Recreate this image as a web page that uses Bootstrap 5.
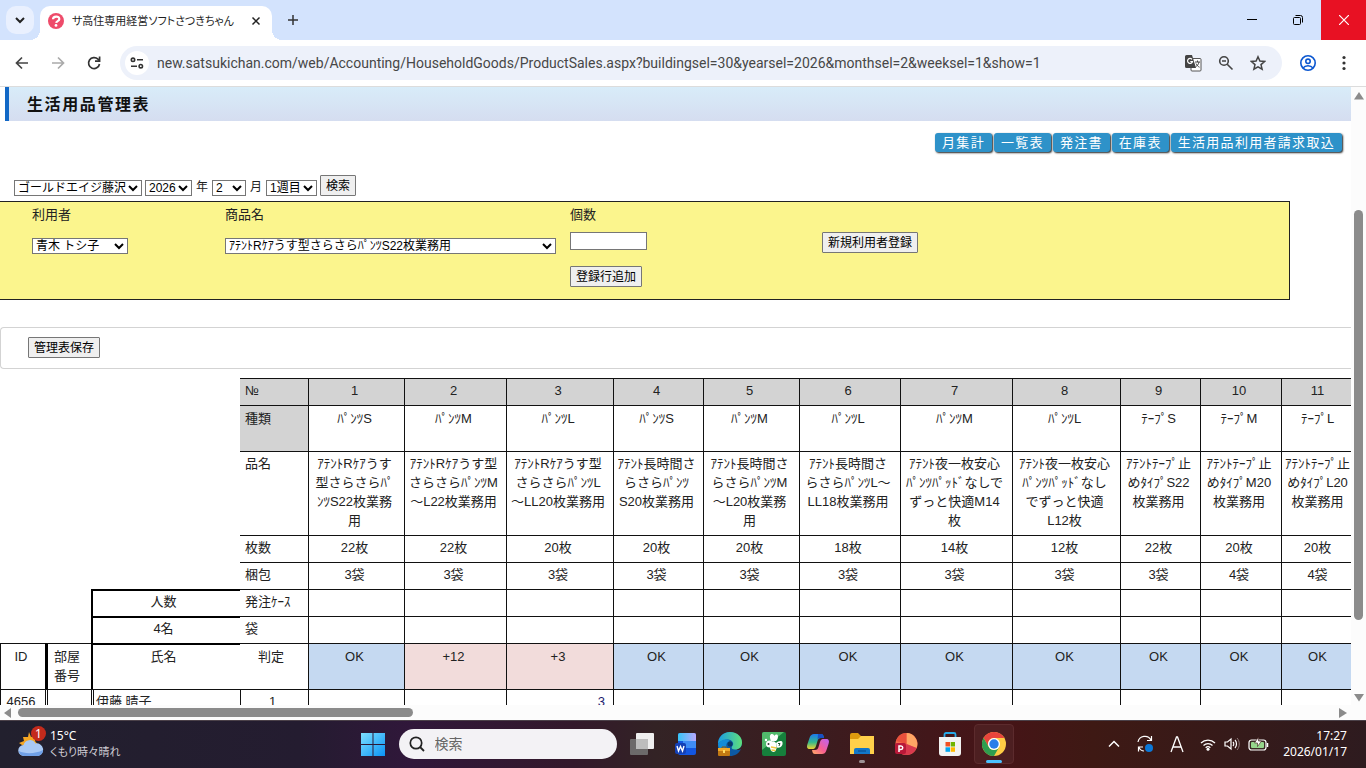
<!DOCTYPE html>
<html lang="ja">
<head>
<meta charset="utf-8">
<meta name="viewport" content="width=device-width, initial-scale=1">
<title>サ高住専用経営ソフトさつきちゃん</title>
<link href="https://cdn.jsdelivr.net/npm/bootstrap@5.3.0/dist/css/bootstrap.min.css" rel="stylesheet">
<style>
  body { font-family: "Liberation Sans", "Noto Sans CJK JP", sans-serif; font-size: 13px; line-height: 19px; color: #222; background: #fff; }
  button { padding: 0; border: 0; background: none; color: inherit; }
  svg { display: block; flex: none; }
  .ui-font { font-family: "Noto Sans", "Noto Sans CJK JP", sans-serif; font-size: 12px; line-height: 16px; font-feature-settings: "palt"; }
  .ui-small { font-size: 11px; }

  /* browser frame */
  .tabstrip { height: 40px; background: #d3e3fd; padding-left: 6px; }
  .tab-menu { width: 28px; height: 28px; border-radius: 10px; background: #e9f0fe; margin-right: 6px; }
  .tab-active { position: relative; width: 232px; height: 34px; background: #fff; border-radius: 10px 10px 0 0; padding: 0 10px 4px 8px; color: #1f1f1f; }
  .tab-active::before, .tab-active::after { content: ""; position: absolute; bottom: 0; width: 10px; height: 10px; }
  .tab-active::before { left: -10px; background: radial-gradient(circle at 0 0, transparent 10px, #fff 10px); }
  .tab-active::after { right: -10px; background: radial-gradient(circle at 100% 0, transparent 10px, #fff 10px); }
  .win-btn { width: 46px; height: 40px; }
  .win-close { background: #e81123; width: 45px; }
  .toolbar { height: 47px; border-bottom: 1px solid #dcdcdc; padding: 0 14px; }
  .nav-ico { width: 16px; margin-right: 20px; }
  .omnibox { height: 34px; border-radius: 17px; background: #edf1fa; padding: 0 16px 0 5px; margin: 0 18px 0 -2px; }
  .site-info { width: 24px; height: 24px; border-radius: 50%; background: #fff; margin-right: 8px; }
  .url-box { border: 0; background: none; padding: 0; outline: 0; color: #474747; font-family: Roboto, sans-serif; font-size: 14px; }
  .more-btn { margin-left: 20px; }

  /* page */
  .page-head { height: 34px; margin-left: 5px; border-left: 4px solid #1268c6; background: linear-gradient(#d8ecf9, #d5ddf0); padding: 2px 0 0 18px; }
  .page-title { font-size: 16px; line-height: 20px; letter-spacing: .1em; font-weight: 700; color: #111; }
  .link-row { padding: 12px 9px 0 0; gap: 2px; }
  .link-btn { background: #2e92c9; color: #fff; text-decoration: none; letter-spacing: .1em; height: 19px; line-height: 19px; padding: 0 7px; border-radius: 3px; box-shadow: 1px 1px 2px #222; white-space: nowrap; }
  .plain-btn { font-size: 12px; line-height: 18px; height: 21px; padding: 1px 5px 0; border: 1px solid #767676; background: #efefef; color: #000; border-radius: 1px; white-space: nowrap; }
  .plain-select { appearance: none; font-size: 12px; line-height: 14px; height: 16px; padding: 0 0 0 3px; border: 1px solid #767676; border-radius: 0; background: #fff url("data:image/svg+xml,%3Csvg xmlns='http://www.w3.org/2000/svg' width='10' height='8' viewBox='0 0 10 8'%3E%3Cpath d='M1 2l4 4 4-4' fill='none' stroke='%23000' stroke-width='2'/%3E%3C/svg%3E") no-repeat right 3px center; color: #000; }
  .filters { padding: 0 0 5px 14px; height: 48px; gap: 3px; margin-top: 1px; }
  .filters label { font-size: 12px; line-height: 18px; margin: 0 1px; }
  .w-home { width: 128px; } .w-year { width: 47px; } .w-month { width: 34px; } .w-week { width: 51px; } .w-user { width: 96px; } .w-item { width: 331px; }
  .entry { display: grid; grid-template-columns: 193px 345px 252px 1fr; height: 99px; margin-right: 61px; padding: 3px 0 0 32px; background: #fbf58d; border: 1px solid #222; border-left: 0; }
  .entry .plain-select { margin-top: 14px; }
  .qty-input { width: 77px; height: 18px; border: 1px solid #767676; border-radius: 0; padding: 0 2px; background: #fff; }
  .new-user { padding-top: 27px; }
  .save-bar { height: 42px; margin-top: 27px; border: 1px solid #d3d3d3; border-right: 0; border-radius: 4px 0 0 4px; padding: 9px 0 0 27px; }

  /* management sheet */
  .sheet { table-layout: fixed; width: 1357px; border-collapse: separate; border-spacing: 0; margin-top: 9px; color: #222; }
  .sheet th, .sheet td { border: 0 solid #111; border-width: 1px 0 0 1px; padding: 2px 4px 5px 0; text-align: center; vertical-align: top; font-weight: 400; white-space: nowrap; height: 27px; }
  .sheet .tall > * { height: 46px; padding-top: 3px; padding-bottom: 4px; }
  .sheet .blank { border: 0; }
  .sheet .lbl { border-left: 0; text-align: left; padding-left: 5px; padding-right: 0; }
  .sheet .mid { text-align: center; padding-left: 0; padding-right: 6px; }
  .sheet .grey, .sheet .numbers td { background: #d3d3d3; }
  .sheet .bold-box { border-width: 2px 0 0 2px; border-color: #000; padding: 1px 6px 5px 0; }
  .sheet .tall .bold-box { padding-top: 2px; }
  .sheet .bold-left { border-left: 3px solid #000; padding-right: 5px; }
  .sheet .ok { background: #c5d9f1; }
  .sheet .over { background: #f2dcdb; }
  .sheet .dbl { border-left: 3px double #111; }
  .sheet .namec { text-align: left; padding-left: 2px; }
  .sheet .qty { text-align: right; padding-right: 8px; color: #1b1b6e; }

  /* scroll bars */
  .vbar { width: 15px; background: #fcfcfc; padding: 5px 0 3px; }
  .vthumb { width: 9px; height: 410px; border-radius: 5px; background: #8b8b8b; margin-top: 110px; }
  .hbar { height: 15px; background: #fcfcfc; padding: 0 19px 0 4px; }
  .hthumb { width: 395px; height: 9px; border-radius: 5px; background: #8b8b8b; margin-left: 6px; }

  /* task bar */
  .taskbar { display: grid; grid-template-columns: 1fr auto 1fr; height: 48px; padding-bottom: 1px; background: linear-gradient(90deg, #22202e 0, #241c30 22%, #30173a 30%, #33192b 42%, #332325 48%, #3a1d20 58%, #461417 73%, #3e1914 80%, #2e1b1f 100%); border-top: 1px solid #4b4149; color: #fff; }
  .weather { position: relative; padding-left: 18px; gap: 6px; }
  .alert-dot { position: absolute; left: 31px; top: 5px; width: 15px; height: 15px; border-radius: 50%; background: #c42b1c; line-height: 15px; text-align: center; }
  .dim { color: #cfccd3; }
  .start { width: 44px; height: 46px; }
  .task-search { width: 218px; height: 30px; border-radius: 15px; background: #f3f2f5; margin: 0 3px 0 4px; padding: 0 10px; gap: 10px; }
  .task-search input { width: 150px; border: 0; padding: 0; background: none; outline: 0; font-size: 14px; line-height: 20px; }
  .task-search input::placeholder { color: #666; opacity: 1; }
  .app { position: relative; width: 44px; height: 46px; }
  .app-on { background: #4d1f21; border: 1px solid #5c2b2d; border-radius: 4px; width: 40px; height: 40px; margin: 0 2px; }
  .run-mark { position: absolute; bottom: 4px; width: 6px; height: 3px; border-radius: 2px; background: #9d9295; }
  .app-on .run-mark { width: 16px; background: #4cc2ff; bottom: 0; }
  .tray { padding-right: 19px; }
  .battery { margin-right: 14px; }
</style>
</head>
<body class="vh-100 overflow-hidden d-flex flex-column">

<header class="flex-shrink-0">
  <div class="tabstrip d-flex align-items-end">
    <button class="tab-menu d-flex align-items-center justify-content-center align-self-center" aria-label="タブを検索"><svg width="10" height="7" viewBox="0 0 10 7"><path d="M1 1l4 4 4-4" fill="none" stroke="#222" stroke-width="2"/></svg></button>
    <div class="tab-active ui-font ui-small d-flex align-items-center">
      <svg width="16" height="16" viewBox="0 0 16 16"><circle cx="8" cy="8" r="8" fill="#ee4b6a"/><path d="M5 6.300C5 2.700 11.500 2.600 11.300 6.100 11.200 8.200 8.400 8 8.200 9.800" fill="none" stroke="#fff" stroke-width="2.200"/><circle cx="8" cy="12.400" r="1.400" fill="#fff"/></svg>
      <span class="ms-2 me-auto text-nowrap">サ高住専用経営ソフトさつきちゃん</span>
      <button aria-label="閉じる"><svg width="12" height="12" viewBox="0 0 12 12"><path d="M2.500 2.500l7 7m0-7l-7 7" stroke="#222" stroke-width="1.500"/></svg></button>
    </div>
    <button class="ms-3 mb-auto mt-auto" aria-label="新しいタブ"><svg width="10" height="10" viewBox="0 0 10 10"><path d="M5 0v10M0 5h10" stroke="#333" stroke-width="1.500"/></svg></button>
    <div class="ms-auto d-flex">
      <button class="win-btn d-flex align-items-center justify-content-center" aria-label="最小化"><svg width="10" height="10" viewBox="0 0 10 10"><path d="M0 4.500h10" stroke="#000"/></svg></button>
      <button class="win-btn d-flex align-items-center justify-content-center" aria-label="元に戻す"><svg width="10" height="10" viewBox="0 0 10 10"><rect x=".5" y="2.500" width="7" height="7" rx="1" fill="none" stroke="#000"/><path d="M2.500 .5h5a2 2 0 0 1 2 2v5" fill="none" stroke="#000"/></svg></button>
      <button class="win-btn win-close d-flex align-items-center justify-content-center" aria-label="ウィンドウを閉じる"><svg width="10" height="10" viewBox="0 0 10 10"><path d="M0 0l10 10M10 0L0 10" stroke="#fff" stroke-width="1.200"/></svg></button>
    </div>
  </div>
  <div class="toolbar d-flex align-items-center">
    <button class="nav-ico" aria-label="戻る"><svg width="16" height="16" viewBox="0 0 16 16"><path d="M14 8H3m5-5.500L2.500 8 8 13.500" fill="none" stroke="#444" stroke-width="1.700"/></svg></button>
    <button class="nav-ico" aria-label="進む"><svg width="16" height="16" viewBox="0 0 16 16"><path d="M2 8h11M8 2.500L13.500 8 8 13.500" fill="none" stroke="#aaa" stroke-width="1.700"/></svg></button>
    <button class="nav-ico" aria-label="再読み込み"><svg width="16" height="16" viewBox="0 0 16 16"><path d="M13.500 9A5.500 5.500 0 1 1 12 4.200L13.300 5.500" fill="none" stroke="#333" stroke-width="1.700"/><path d="M13.600 1.500v4.700H9" fill="none" stroke="#333" stroke-width="1.700"/></svg></button>
    <div class="omnibox flex-grow-1 d-flex align-items-center">
      <button class="site-info d-flex align-items-center justify-content-center" aria-label="サイト情報"><svg width="14" height="12" viewBox="0 0 14 12"><g fill="none" stroke="#333" stroke-width="1.600"><circle cx="3" cy="2.800" r="1.700"/><path d="M7 2.800h6M1 9.200h6"/><circle cx="10.800" cy="9.200" r="1.700"/></g></svg></button>
      <input class="url-box flex-grow-1" aria-label="アドレス" value="new.satsukichan.com/web/Accounting/HouseholdGoods/ProductSales.aspx?buildingsel=30&amp;yearsel=2026&amp;monthsel=2&amp;weeksel=1&amp;show=1">
      <div class="d-flex gap-3">
        <svg width="17" height="17" viewBox="0 0 17 17"><rect x="6" y="3.500" width="10" height="12.500" rx="1" fill="#fff" stroke="#555"/><path d="M1.500 0H7l4 13H1.500A1.500 1.500 0 0 1 0 11.500v-10A1.500 1.500 0 0 1 1.500 0z" fill="#444"/><path d="M7 4.300a2.500 2.500 0 1 0 .5 2.200H5.300" fill="none" stroke="#fff" stroke-width="1.200"/><path d="M10 7h5M12.500 5.500V7M14 7c-.5 2.500-2 4-3.500 5M11 8.500c.8 1.800 2 3 3.500 3.700" fill="none" stroke="#444"/></svg>
        <svg width="16" height="16" viewBox="0 0 16 16"><circle cx="6" cy="6" r="4.300" fill="none" stroke="#444" stroke-width="1.600"/><path d="M4 6h4M9.200 9.200l5.300 5.300" stroke="#444" stroke-width="1.600"/></svg>
        <svg width="16" height="16" viewBox="0 0 16 16"><path d="M8 1.800l1.900 4.300 4.700.4-3.600 3.100 1.100 4.600L8 11.800l-4.100 2.400L5 9.600 1.400 6.500l4.700-.4z" fill="none" stroke="#444" stroke-width="1.500"/></svg>
      </div>
    </div>
    <button aria-label="プロフィール"><svg width="16" height="16" viewBox="0 0 16 16"><g fill="none" stroke="#0b57d0" stroke-width="1.600"><circle cx="8" cy="8" r="7.200"/><circle cx="8" cy="6.300" r="2.200"/><path d="M3.200 12.900c2-2.900 7.600-2.900 9.600 0"/></g></svg></button>
    <button class="more-btn" aria-label="メニュー"><svg width="16" height="16" viewBox="0 0 16 16" fill="#333"><circle cx="8" cy="2.500" r="1.600"/><circle cx="8" cy="8" r="1.600"/><circle cx="8" cy="13.500" r="1.600"/></svg></button>
  </div>
</header>

<div class="d-flex flex-grow-1 overflow-hidden">
  <main class="flex-grow-1 overflow-hidden">
    <div class="page-head d-flex align-items-center"><h1 class="page-title mb-0">生活用品管理表</h1></div>
    <nav class="link-row d-flex justify-content-end">
      <a class="link-btn" href="#">月集計</a><a class="link-btn" href="#">一覧表</a><a class="link-btn" href="#">発注書</a><a class="link-btn" href="#">在庫表</a><a class="link-btn" href="#">生活用品利用者請求取込</a>
    </nav>
    <form class="filters d-flex align-items-end">
      <select class="plain-select w-home" aria-label="施設"><option>ゴールドエイジ藤沢</option></select>
      <select class="plain-select w-year" id="year"><option>2026</option></select>
      <label for="year">年</label>
      <select class="plain-select w-month" id="month"><option>2</option></select>
      <label for="month">月</label>
      <select class="plain-select w-week" aria-label="週"><option>1週目</option></select>
      <button type="button" class="plain-btn">検索</button>
    </form>
    <form class="entry">
      <div><label class="d-block" for="user">利用者</label><select id="user" class="plain-select w-user d-block"><option>青木 トシ子</option></select></div>
      <div><label class="d-block" for="item">商品名</label><select id="item" class="plain-select w-item d-block"><option>ｱﾃﾝﾄRｹｱうす型さらさらﾊﾟﾝﾂS22枚業務用</option></select></div>
      <div><label class="d-block mb-2" for="qty">個数</label><input id="qty" class="qty-input d-block mb-3" type="text"><button type="button" class="plain-btn d-block">登録行追加</button></div>
      <div class="new-user"><button type="button" class="plain-btn d-block">新規利用者登録</button></div>
    </form>
    <div class="save-bar"><button type="button" class="plain-btn d-block">管理表保存</button></div>

    <table class="sheet">
      <colgroup><col style="width:45px"><col style="width:46px"><col style="width:149px"><col style="width:68px"><col style="width:96px"><col style="width:102px"><col style="width:107px"><col style="width:90px"><col style="width:96px"><col style="width:101px"><col style="width:112px"><col style="width:108px"><col style="width:80px"><col style="width:81px"><col style="width:76px"></colgroup>
      <tbody>
      <tr class="numbers"><th class="blank" colspan="3" rowspan="5"></th><th class="lbl grey">№</th><td>1</td><td>2</td><td>3</td><td>4</td><td>5</td><td>6</td><td>7</td><td>8</td><td>9</td><td>10</td><td>11</td></tr>
      <tr class="tall"><th class="lbl grey">種類</th><td>ﾊﾟﾝﾂS</td><td>ﾊﾟﾝﾂM</td><td>ﾊﾟﾝﾂL</td><td>ﾊﾟﾝﾂS</td><td>ﾊﾟﾝﾂM</td><td>ﾊﾟﾝﾂL</td><td>ﾊﾟﾝﾂM</td><td>ﾊﾟﾝﾂL</td><td>ﾃｰﾌﾟS</td><td>ﾃｰﾌﾟM</td><td>ﾃｰﾌﾟL</td></tr>
      <tr><th class="lbl">品名</th>
        <td>ｱﾃﾝﾄRｹｱうす<br>型さらさらﾊﾟ<br>ﾝﾂS22枚業務<br>用</td>
        <td>ｱﾃﾝﾄRｹｱうす型<br>さらさらﾊﾟﾝﾂM<br>～L22枚業務用</td>
        <td>ｱﾃﾝﾄRｹｱうす型<br>さらさらﾊﾟﾝﾂL<br>～LL20枚業務用</td>
        <td>ｱﾃﾝﾄ長時間さ<br>らさらﾊﾟﾝﾂ<br>S20枚業務用</td>
        <td>ｱﾃﾝﾄ長時間さ<br>らさらﾊﾟﾝﾂM<br>～L20枚業務<br>用</td>
        <td>ｱﾃﾝﾄ長時間さ<br>らさらﾊﾟﾝﾂL～<br>LL18枚業務用</td>
        <td>ｱﾃﾝﾄ夜一枚安心<br>ﾊﾟﾝﾂﾊﾟｯﾄﾞなしで<br>ずっと快適M14<br>枚</td>
        <td>ｱﾃﾝﾄ夜一枚安心<br>ﾊﾟﾝﾂﾊﾟｯﾄﾞなし<br>でずっと快適<br>L12枚</td>
        <td>ｱﾃﾝﾄﾃｰﾌﾟ止<br>めﾀｲﾌﾟS22<br>枚業務用</td>
        <td>ｱﾃﾝﾄﾃｰﾌﾟ止<br>めﾀｲﾌﾟM20<br>枚業務用</td>
        <td>ｱﾃﾝﾄﾃｰﾌﾟ止<br>めﾀｲﾌﾟL20<br>枚業務用</td></tr>
      <tr><th class="lbl">枚数</th><td>22枚</td><td>22枚</td><td>20枚</td><td>20枚</td><td>20枚</td><td>18枚</td><td>14枚</td><td>12枚</td><td>22枚</td><td>20枚</td><td>20枚</td></tr>
      <tr><th class="lbl">梱包</th><td>3袋</td><td>3袋</td><td>3袋</td><td>3袋</td><td>3袋</td><td>3袋</td><td>3袋</td><td>3袋</td><td>3袋</td><td>4袋</td><td>4袋</td></tr>
      <tr><th class="blank" colspan="2"></th><th class="bold-box">人数</th><th class="lbl">発注ｹｰｽ</th><td></td><td></td><td></td><td></td><td></td><td></td><td></td><td></td><td></td><td></td><td></td></tr>
      <tr><th class="blank" colspan="2"></th><td class="bold-box">4名</td><th class="lbl">袋</th><td></td><td></td><td></td><td></td><td></td><td></td><td></td><td></td><td></td><td></td><td></td></tr>
      <tr class="tall"><th>ID</th><th class="bold-left">部屋<br>番号</th><th class="bold-box">氏名</th><th class="lbl mid">判定</th><td class="ok">OK</td><td class="over">+12</td><td class="over">+3</td><td class="ok">OK</td><td class="ok">OK</td><td class="ok">OK</td><td class="ok">OK</td><td class="ok">OK</td><td class="ok">OK</td><td class="ok">OK</td><td class="ok">OK</td></tr>
      <tr><td>4656</td><td class="dbl"></td><td class="dbl namec">伊藤 晴子</td><td>1</td><td></td><td></td><td class="qty">3</td><td></td><td></td><td></td><td></td><td></td><td></td><td></td><td></td></tr>
      </tbody>
    </table>
  </main>
  <div class="vbar flex-shrink-0 d-flex flex-column align-items-center">
    <svg width="10" height="8" viewBox="0 0 10 8"><path d="M5 0l5 7.500H0z" fill="#8b8b8b"/></svg>
    <div class="vthumb"></div>
    <svg class="mt-auto" width="10" height="8" viewBox="0 0 10 8"><path d="M5 7.500L10 0H0z" fill="#8b8b8b"/></svg>
  </div>
</div>
<div class="hbar flex-shrink-0 d-flex align-items-center">
  <svg width="8" height="10" viewBox="0 0 8 10"><path d="M0 5l7-5v10z" fill="#8b8b8b"/></svg>
  <div class="hthumb"></div>
  <svg class="ms-auto" width="8" height="10" viewBox="0 0 8 10"><path d="M8 5L0 0v10z" fill="#8b8b8b"/></svg>
</div>

<footer class="taskbar ui-font flex-shrink-0">
  <div class="weather d-flex align-items-center">
    <svg width="26" height="26" viewBox="0 0 26 26"><path d="M11 1l2 5 5-2-1 6 4 5-8 4-6-3-6-4 5-2-1-4 5 0z" fill="#f5a623"/><path d="M6 25a5.500 5.500 0 0 1-.5-11 6.500 6.500 0 0 1 12-1.500A6 6 0 0 1 20 25z" fill="#a9c9f5"/><path d="M1 20c5 3 17 3 24-1a5.500 5.500 0 0 1-5 6H6a5.500 5.500 0 0 1-5-5z" fill="#6f9fe6"/></svg>
    <span class="alert-dot">1</span>
    <div><div>15°C</div><div class="dim ui-small">くもり時々晴れ</div></div>
  </div>
  <div class="d-flex align-items-center">
    <button class="start d-flex align-items-center justify-content-center" aria-label="スタート"><svg width="24" height="24" viewBox="0 0 24 24"><defs><linearGradient id="wn" x1="0" y1="0" x2="1" y2="1"><stop stop-color="#7ee0ff"/><stop offset="1" stop-color="#0a93f5"/></linearGradient></defs><path d="M0 1h11.500v11H0zM12.500 1H24v11H12.500zM0 13h11.500v11H0zM12.500 13H24v11H12.500z" fill="url(#wn)"/></svg></button>
    <div class="task-search d-flex align-items-center"><svg width="16" height="16" viewBox="0 0 16 16"><circle cx="7" cy="7" r="5.700" fill="none" stroke="#222" stroke-width="1.700"/><path d="M11 11l4 4" stroke="#222" stroke-width="1.800"/></svg><input type="text" placeholder="検索" aria-label="検索"></div>
    <button class="app d-flex align-items-center justify-content-center" aria-label="タスク ビュー"><svg width="24" height="24" viewBox="0 0 24 24"><rect x="6" y="1" width="18" height="16" rx="1" fill="#efefef"/><rect y="7" width="18" height="16" rx="1" fill="#777" fill-opacity=".85"/><path d="M6 7h12v10H6z" fill="#bdbdbd"/></svg></button>
    <button class="app d-flex align-items-center justify-content-center" aria-label="Word"><svg width="24" height="24" viewBox="0 0 24 24"><defs><linearGradient id="wd" x1="0" x2="1"><stop stop-color="#36c5f7"/><stop offset="1" stop-color="#b9a9ff"/></linearGradient></defs><rect x="4" y="1" width="18" height="22" rx="2" fill="#1356e0"/><path d="M4 9V3a2 2 0 0 1 2-2h14a2 2 0 0 1 2 2v6z" fill="url(#wd)"/><path d="M9 9h13v7H9z" fill="#3f8df5"/><rect x="1" y="11" width="11" height="11" rx="2" fill="#1440b5"/><path d="M3 14l1.500 5L6.500 14.500 8.500 19 10 14" fill="none" stroke="#fff" stroke-width="1.400"/></svg></button>
    <button class="app d-flex align-items-center justify-content-center" aria-label="Edge"><svg width="24" height="24" viewBox="0 0 24 24"><defs><linearGradient id="eg" x1="0" x2="1"><stop stop-color="#1b9de2"/><stop offset="1" stop-color="#5fe07a"/></linearGradient></defs><path d="M0 12C0 5 5 0 12 0s12 5 12 11c0 4-3 6.500-6 6.500 2 1 3.500.5 5-.5-2 4.500-6 7-11 7C5 24 0 19 0 12z" fill="#0c59a4"/><path d="M0 12C0 5 5 0 12 0c8 0 12 5.500 12 10.500 0 4.500-3 7-7 7-3 0-4-1-3-3 3-3 0-7-4-7-4 0-8 1.500-10 4.500z" fill="url(#eg)"/><path d="M0 12c2-4 8-6 12-3-4 1-5 5-2 9v5C3 22 0 17 0 12z" fill="#128bd9"/><circle cx="12" cy="12" r="2.500" fill="#0a3a66"/><rect y="16" width="12" height="8" rx="1" fill="#c27912"/><path d="M0 16h12v3H0z" fill="#f0a92c"/><path d="M4 16v-1h4v1" fill="none" stroke="#8b5208"/><path d="M5 18h2v3H5z" fill="#ffdc63"/></svg></button>
    <button class="app d-flex align-items-center justify-content-center" aria-label="メモアプリ"><svg width="24" height="24" viewBox="0 0 24 24"><rect width="24" height="24" rx="2" fill="#16803c"/><path d="M0 2a2 2 0 0 1 2-2h20L0 18z" fill="#51b96c"/><path d="M9 9C7 4 8 2 10 2c1.500 0 2 1 2.500 2C13.500 2 16 2 16 4.500 16 7 15 8 14 9z" fill="#fff"/><path d="M14 11c2-2 6-3 6.500-.5.500 3-2 6-5.500 5z" fill="#fff"/><circle cx="7.500" cy="12" r="3.500" fill="#fff"/><path d="M9 10c3-2 5 0 5.500 3 .5 4-1 7-3 7s-4-3-3.500-6z" fill="#fff"/><path d="M9 15l5.500 1M9.500 18l4 .5" stroke="#f2c63c" stroke-width="1.400"/><circle cx="6.500" cy="12" r="1" fill="#333"/><path d="M16 11.500h2l-1 2.500" stroke="#245b37" fill="none"/><circle cx="4" cy="8" r="1.200" fill="#fff"/></svg></button>
    <button class="app d-flex align-items-center justify-content-center" aria-label="Copilot"><svg width="24" height="24" viewBox="0 0 24 24"><defs><linearGradient id="ca" x1="0" y1="0" x2="0" y2="1"><stop stop-color="#1b79ee"/><stop offset=".55" stop-color="#35b98c"/><stop offset="1" stop-color="#f0d331"/></linearGradient><linearGradient id="cb" x1="1" y1="0" x2="0" y2="1"><stop stop-color="#bd62f5"/><stop offset=".55" stop-color="#f75e92"/><stop offset="1" stop-color="#ffae63"/></linearGradient></defs><path d="M8 2h7c2 0 2.500 1.500 3 4h-3c-2 0-3 1-3.500 3L10 14c-.7 2.500-2 3-4 3H4c-3 0-3.500-2-2.500-5l2-6C4.500 3 6 2 8 2z" fill="url(#ca)"/><path d="M12 2h3c2 0 2.500 1.500 3 4h-3c-2 0-3 .5-3.500 2z" fill="#1750c5"/><path d="M16 22H9c-2 0-2.500-1.500-3-4h3c2 0 3-1 3.500-3L14 10c.7-2.500 2-3 4-3h2c3 0 3.500 2 2.500 5l-2 6c-1 3-2.500 4-4.500 4z" fill="url(#cb)"/></svg></button>
    <button class="app d-flex align-items-center justify-content-center" aria-label="エクスプローラー"><svg width="24" height="24" viewBox="0 0 24 24"><path d="M0 3a2 2 0 0 1 2-2h6l3 3h11a2 2 0 0 1 2 2v3H0z" fill="#dd9a0e"/><path d="M0 7h8l3-3h13v18H0z" fill="#ffd04a"/><path d="M4 22v-4a2 2 0 0 1 2-2h12a2 2 0 0 1 2 2v4z" fill="#1277c9"/><path d="M8 19h8" stroke="#0b569b" stroke-width="1.500"/></svg><span class="run-mark"></span></button>
    <button class="app d-flex align-items-center justify-content-center" aria-label="PowerPoint"><svg width="24" height="24" viewBox="0 0 24 24"><circle cx="12.500" cy="12" r="11" fill="#f56a4d"/><path d="M12.500 1a11 11 0 0 1 10 15l-10-4z" fill="#ffa765"/><path d="M12.500 12l10 4a11 11 0 0 1-15 6z" fill="#d93a4e"/><path d="M12.500 1v11L2 9a11 11 0 0 1 10.500-8z" fill="#e9503c"/><rect x="1" y="11" width="11" height="11" rx="2" fill="#b91838"/><path d="M5 20v-6h2a1.700 1.700 0 0 1 0 3.500H5" fill="none" stroke="#fff" stroke-width="1.500"/></svg></button>
    <button class="app d-flex align-items-center justify-content-center" aria-label="Microsoft Store"><svg width="24" height="24" viewBox="0 0 24 24"><path d="M6.500 6V2.500A1.500 1.500 0 0 1 8 1h8a1.500 1.500 0 0 1 1.500 1.500V6" fill="none" stroke="#26a9e8" stroke-width="1.800"/><path d="M1 5h22v16a3 3 0 0 1-3 3H4a3 3 0 0 1-3-3z" fill="#f2f2f2"/><path d="M7.500 10H12v4.500H7.500z" fill="#f25022"/><path d="M12.700 10H17v4.500h-4.300z" fill="#6fb400"/><path d="M7.500 15.300H12v4.500H7.500z" fill="#00a4ef"/><path d="M12.700 15.300H17v4.500h-4.300z" fill="#ffb900"/></svg></button>
    <button class="app app-on d-flex align-items-center justify-content-center" aria-label="Chrome"><svg width="24" height="24" viewBox="0 0 24 24"><circle cx="12" cy="12" r="12" fill="#fc4"/><path d="M1.600 6A12 12 0 0 1 22.400 6H12a6 6 0 0 0-5.200 9z" fill="#e8453c"/><path d="M1.600 6A12 12 0 0 0 12 24l5.200-9A6 6 0 0 1 6.800 15z" fill="#2f9e4f"/><circle cx="12" cy="12" r="6" fill="#fff"/><circle cx="12" cy="12" r="4.700" fill="#2b7de9"/></svg><span class="run-mark"></span></button>
  </div>
  <div class="tray d-flex align-items-center justify-content-end">
    <svg class="me-3" width="12" height="8" viewBox="0 0 12 8"><path d="M1 6.500l5-5 5 5" fill="none" stroke="#fff" stroke-width="1.500"/></svg>
    <svg class="me-3" width="18" height="18" viewBox="0 0 18 18"><path d="M2 7a7 7 0 0 1 13-2M15.500 1v4.500H11M2.500 16.500V12H7M3 12.500c1 2 3 3.500 5 3.500" fill="none" stroke="#fff" stroke-width="1.200"/><circle cx="13" cy="13" r="4" fill="#0b78d8"/></svg>
    <svg class="me-3" width="14" height="17" viewBox="0 0 14 17"><path d="M1 16L6.500 1h1L13 16M3 11h8" fill="none" stroke="#fff" stroke-width="1.300"/></svg>
    <svg class="me-2" width="16" height="13" viewBox="0 0 16 13"><g fill="none" stroke="#fff" stroke-width="1.300"><path d="M1 5a10 10 0 0 1 14 0M3.500 7.500a6.500 6.500 0 0 1 9 0M5.700 9.800a3.300 3.300 0 0 1 4.600 0"/></g><circle cx="8" cy="11.300" r="1.500" fill="#fff"/></svg>
    <svg class="me-2" width="16" height="14" viewBox="0 0 16 14"><path d="M1 5h2.500L7 2v10L3.500 9H1z" fill="none" stroke="#fff" stroke-width="1.200"/><path d="M9 5c1 1 1 3 0 4M11 3c2 2 2 6 0 8" fill="none" stroke="#fff" stroke-width="1.200"/><path d="M13 1c3 3 3 9 0 12" fill="none" stroke="#8d7a7a"/></svg>
    <svg class="battery" width="21" height="14" viewBox="0 0 21 14"><rect x="1" y="3" width="17" height="10" rx="2.500" fill="#3a2a25" stroke="#fff" stroke-width="1.200"/><rect x="3" y="5" width="13" height="6" rx="1" fill="#96d68c"/><path d="M19.500 6v4" stroke="#fff" stroke-width="1.500"/><path d="M10.500 0L6.500 6h3v3.500l4-5.500h-3z" fill="#fff" stroke="#3a1a17" stroke-width=".6"/></svg>
    <div class="text-end"><div>17:27</div><div>2026/01/17</div></div>
  </div>
</footer>
<script src="https://cdn.jsdelivr.net/npm/bootstrap@5.3.0/dist/js/bootstrap.bundle.min.js"></script>
</body>
</html>
